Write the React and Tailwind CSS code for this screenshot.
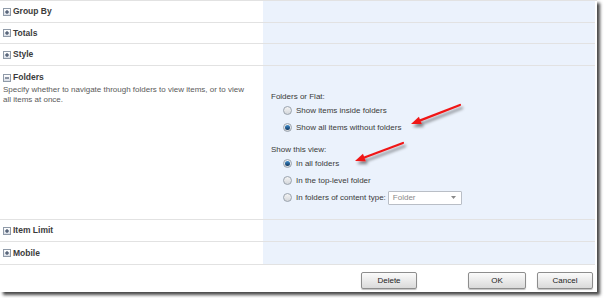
import React from 'react';

const ExpandIcon = ({ open }) => (
    <span className="inline-flex w-[8px] h-[8px] border border-[#8f9aa8] bg-gradient-to-b from-white to-[#d9dee6] items-center justify-center shrink-0">
        <svg width="6" height="6" viewBox="0 0 6 6">
            <rect x="1" y="2.5" width="4" height="1" fill="#2b3a55" />
            {!open && <rect x="2.5" y="1" width="1" height="4" fill="#2b3a55" />}
        </svg>
    </span>
);

const SectionTitle = ({ open, children }) => (
    <div className="flex items-center gap-[2px] pl-[3px] text-[8.5px] font-bold text-[#3b3b3b]">
        <ExpandIcon open={open} />
        <span>{children}</span>
    </div>
);

const Radio = ({ checked, children }) => (
    <div className="flex items-center h-[17px] ml-[12px] gap-[4px]">
        <span className="w-[9px] h-[9px] rounded-full border border-[#9aa3ad] bg-gradient-to-b from-[#f4f4f4] to-[#d4d7db] flex items-center justify-center shrink-0">
            {checked && <span className="w-[5px] h-[5px] rounded-full bg-gradient-to-b from-[#3f8fd0] to-[#10365e]" />}
        </span>
        <span className="text-[8px] text-[#3a3a3a] whitespace-nowrap">{children}</span>
    </div>
);

const Row = ({ height, children }) => (
    <div className={`flex border-b border-[#e2e2e2] ${height}`}>
        <div className="w-[263px] flex items-center">{children}</div>
        <div className="flex-1 bg-[#ebf2fc]" />
    </div>
);

const Button = ({ w, children }) => (
    <button className={`h-[17px] ${w} border border-[#8d8d8d] rounded-[2px] bg-gradient-to-b from-[#fbfbfb] to-[#dadada] text-[8px] text-[#222] shadow-[0_1px_1px_rgba(0,0,0,0.25)]`}>
        {children}
    </button>
);

const Arrow = ({ x1, y1, x2, y2 }) => {
    const dx = x2 - x1, dy = y2 - y1;
    const len = Math.hypot(dx, dy);
    const ux = dx / len, uy = dy / len;
    const bx = x2 - ux * 10, by = y2 - uy * 10;
    const nx = -uy * 4, ny = ux * 4;
    return (
        <g filter="url(#arrowShadow)">
            <line x1={x1} y1={y1} x2={bx} y2={by} stroke="#f01818" strokeWidth="2.2" strokeLinecap="round" />
            <polygon points={`${x2},${y2} ${bx + nx},${by + ny} ${bx - nx},${by - ny}`} fill="#f01818" />
        </g>
    );
};

export default function App() {
    return (
        <div className="w-[604px] h-[298px] bg-white overflow-hidden font-['Liberation_Sans',Arial,sans-serif]">
            <div className="relative w-[597px] h-[292px] bg-white border-t border-[#e2e2e2] pr-[2px] flex flex-col shadow-[3px_3px_3px_rgba(40,40,40,0.85)]">
                <Row height="h-[22px]"><SectionTitle>Group By</SectionTitle></Row>
                <Row height="h-[21px]"><SectionTitle>Totals</SectionTitle></Row>
                <Row height="h-[22px]"><SectionTitle>Style</SectionTitle></Row>

                {/* Folders */}
                <div className="flex border-b border-[#e2e2e2] h-[154px]">
                    <div className="w-[263px] pt-[6px]">
                        <div className="h-[11px] flex items-center"><SectionTitle open>Folders</SectionTitle></div>
                        <p className="mt-[2px] pl-[3px] text-[8px] leading-[10px] text-[#5a5a5a] whitespace-nowrap">
                            Specify whether to navigate through folders to view items, or to view
                            <br />
                            all items at once.
                        </p>
                    </div>
                    <div className="flex-1 bg-[#ebf2fc] pl-[8px] pt-[26px]">
                        <div className="text-[8px] leading-[10px] text-[#3a3a3a]">Folders or Flat:</div>
                        <Radio>Show items inside folders</Radio>
                        <Radio checked>Show all items without folders</Radio>
                        <div className="mt-[9px] text-[8px] leading-[10px] text-[#3a3a3a]">Show this view:</div>
                        <Radio checked>In all folders</Radio>
                        <Radio>In the top-level folder</Radio>
                        <div className="flex items-center">
                            <Radio>In folders of content type:</Radio>
                            <div className="ml-[2px] w-[74px] h-[14px] bg-white border border-[#b9bec6] rounded-[1px] flex items-center justify-between pl-[4px] pr-[5px]">
                                <span className="text-[8px] text-[#8a8a8a]">Folder</span>
                                <svg width="5" height="3" viewBox="0 0 5 3"><polygon points="0,0 5,0 2.5,3" fill="#8a8a8a" /></svg>
                            </div>
                        </div>
                    </div>
                </div>

                <Row height="h-[22px]"><SectionTitle>Item Limit</SectionTitle></Row>
                <Row height="h-[23px]"><SectionTitle>Mobile</SectionTitle></Row>

                {/* Buttons */}
                <div className="flex items-start pt-[7px] pl-[361px]">
                    <Button w="w-[56px]">Delete</Button>
                    <div className="ml-[51px] flex gap-[11px]">
                        <Button w="w-[58px]">OK</Button>
                        <Button w="w-[56px]">Cancel</Button>
                    </div>
                </div>

                <svg className="absolute left-0 top-0 pointer-events-none" width="597" height="292">
                    <defs>
                        <filter id="arrowShadow" x="-20%" y="-50%" width="150%" height="250%">
                            <feDropShadow dx="2" dy="3" stdDeviation="1.5" floodColor="#000" floodOpacity="0.45" />
                        </filter>
                    </defs>
                    <Arrow x1={460} y1={104} x2={411} y2={123} />
                    <Arrow x1={403} y1={142} x2={355} y2={160} />
                </svg>
            </div>
        </div>
    );
}
